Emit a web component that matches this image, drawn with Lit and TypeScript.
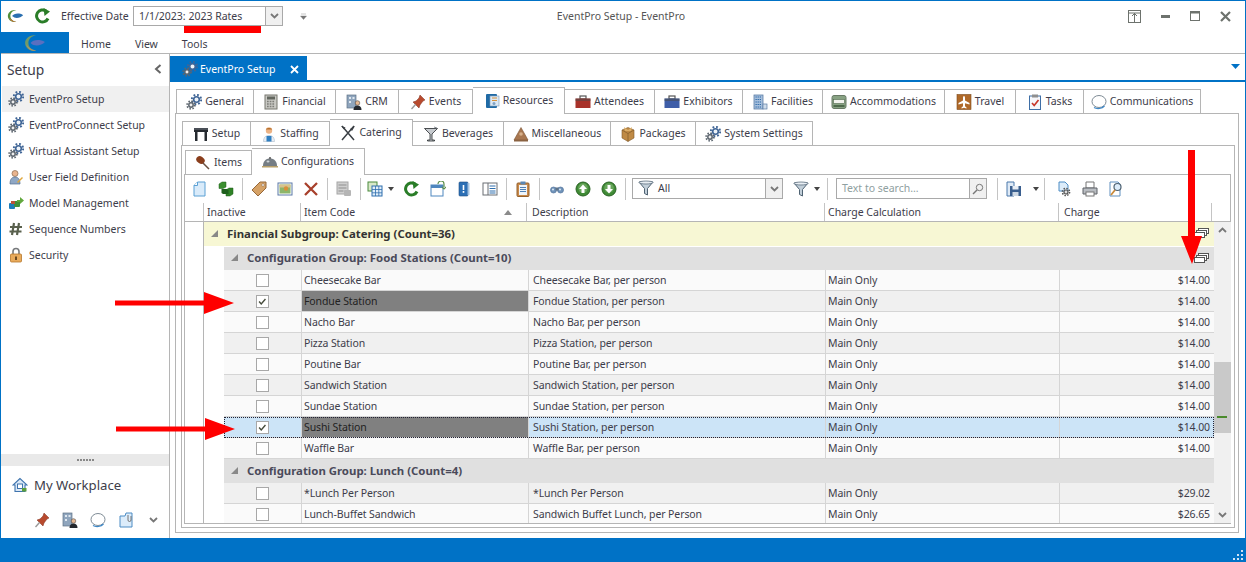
// app.ts - EventPro setup window: sidebar, nested tabs and the configurations grid

import {LitElement, html, css, svg} from 'lit';
import {customElement} from 'lit/decorators.js';

const BLUE = css`#0072c6`;

// every icon is drawn on a 16x16 box
const paths: Record<string, unknown> = {
  gear: svg`<circle cx="10.5" cy="5.5" r="2.800" fill="#eef3f8" stroke="#3f6596" stroke-width="1.600"/><circle cx="10.5" cy="5.5" r="4.700" fill="none" stroke="#3f6596" stroke-width="1.900" stroke-dasharray="1.800 1.900"/><circle cx="5" cy="11" r="2.200" fill="#eee" stroke="#5c656e" stroke-width="1.500"/><circle cx="5" cy="11" r="3.900" fill="none" stroke="#5c656e" stroke-width="1.700" stroke-dasharray="1.500 1.560"/>`,
  user: svg`<circle cx="7" cy="4.5" r="3" fill="#e9b48e" stroke="#8a6a50" stroke-width=".7"/><path d="M2 15c0-5 2-7 5-7s5 2 5 7z" fill="#8fa7c4" stroke="#56708f" stroke-width=".7"/><path d="M9 13l5-5 1 1-5 5z" fill="#e0a83c"/>`,
  model: svg`<rect x="1" y="8" width="6" height="6" rx="1" fill="#1c7db8"/><rect x="6" y="6" width="6" height="6" rx="1" fill="#3f8f3a"/><path d="M9 5h3V2l4 3.500L12 9V7H9z" fill="#62a83e"/><rect x="3" y="6" width="4" height="3" fill="#b9533a"/>`,
  hash: svg`<path d="M6 2L4 14M11 2L9 14M2 6h12M1.500 10.500h12" stroke="#59604d" stroke-width="2.200" fill="none"/>`,
  lock: svg`<path d="M5 7V4.500a3 3 0 0 1 6 0V7" fill="none" stroke="#77797c" stroke-width="1.600"/><rect x="2.500" y="7" width="11" height="8" rx="1" fill="#e9ab5c" stroke="#b5762c" stroke-width=".8"/><rect x="7" y="9.500" width="2" height="3.500" fill="#6b4a22"/>`,
  home: svg`<path d="M8 1.500L1 8h2v6.500h10V8h2z" fill="#dbe8f6" stroke="#3f74ae" stroke-width="1.100"/><rect x="5.500" y="7" width="5" height="4.500" fill="#fff" stroke="#3f74ae"/><rect x="10" y="11" width="4.500" height="3.500" fill="#5b9e3d"/>`,
  pin: svg`<path d="M10 1l5 5-2 1-3 4-1 3-6-6 3-1 3-3z" fill="#b84a2e" stroke="#7e2f1c" stroke-width=".5"/><path d="M5.500 10.500L1.500 15" stroke="#999" stroke-width="1.400"/>`,
  crm: svg`<rect x="1" y="1" width="9" height="13" fill="#8fa5bd" stroke="#5f7286" stroke-width=".7"/><path d="M3 3h2v2H3zM6.500 3h2v2h-2zM3 7h2v2H3z" fill="#dfe8f0"/><circle cx="11.500" cy="9" r="2.300" fill="#e6b892" stroke="#333" stroke-width=".5"/><path d="M7.500 16c0-3 1.500-4.500 4-4.500s4 1.500 4 4.500z" fill="#24282e"/>`,
  bubble: svg`<ellipse cx="8" cy="7.500" rx="7" ry="6" fill="#fff" stroke="#7f8c96" stroke-width="1"/><path d="M3 13.500c3 1.800 8 1.300 10.500-1.500" stroke="#3d87c7" stroke-width="1.200" fill="none"/>`,
  note: svg`<path d="M2 4h5l1-3h6v14H2z" fill="#dcecfa" stroke="#4c8cc4"/><path d="M10 3v5a1.500 1.500 0 0 0 3 0V4" fill="none" stroke="#666" stroke-width=".9"/>`,
  calc: svg`<rect x="2" y="1" width="12" height="14" fill="#c9c9c4" stroke="#77776f"/><rect x="4" y="2.500" width="8" height="3" fill="#62665e"/><path d="M4 7.500h8M4 10h8M4 12.500h8" stroke="#7d7d78" stroke-width="1.300" stroke-dasharray="1.700 1"/>`,
  resources: svg`<rect x="2" y="1" width="11" height="14" rx="1" fill="#1f6aa5"/><rect x="6" y="3" width="9" height="10" fill="#dce9f4" stroke="#7d99b5" stroke-width=".6"/><path d="M8 5h5M8 7.500h5" stroke="#d6913c"/><circle cx="10" cy="10.500" r="1.500" fill="#7fa2c4"/>`,
  building: svg`<rect x="2" y="1" width="9" height="14" fill="#a6bfdc" stroke="#5c7ea6" stroke-width=".8"/><path d="M3.500 3h6M3.500 5.500h6M3.500 8h6M3.500 10.500h6M3.500 13h6" stroke="#2f6aa8" stroke-width="1.200" stroke-dasharray="1.300 .8"/><rect x="11" y="10" width="4" height="5" fill="#cfdcea" stroke="#5c7ea6" stroke-width=".7"/>`,
  bed: svg`<rect x="1" y="1.500" width="14" height="13" rx="2" fill="#88a283" stroke="#697a66"/><rect x="2.500" y="5.500" width="11" height="4" fill="#f3f3ee" stroke="#4f6a4c" stroke-width=".6"/><rect x="2.500" y="11" width="11" height="2" fill="#4f6a4c"/>`,
  travel: svg`<rect x="1" y=".5" width="14" height="15" fill="#b06a2a" stroke="#7d4a1c" stroke-width=".6"/><path d="M8 2c.8 0 1 1 1 2v2.500l4.500 2.500v1.500L9 9.200v3l1.500 1.200v1L8 13.800l-2.500.6v-1L7 12.200v-3l-4.500 1.300V9L7 6.500V4c0-1 .2-2 1-2z" fill="#fff"/>`,
  tasks: svg`<rect x="2.500" y="2" width="11" height="13.500" fill="#f6f7fb" stroke="#3e6ea6"/><rect x="5" y=".5" width="6" height="3" fill="#8f8f8f"/><path d="M5 9l2.200 2.500L11.500 6" fill="none" stroke="#c8372a" stroke-width="1.700"/>`,
  table: svg`<path d="M1 3h14v3H1zM2 6h2.500v9H2zM11.500 6H14v9h-2.500z" fill="#262a30"/><rect x="1" y="2" width="14" height="2" fill="#4a4f57"/>`,
  staff: svg`<circle cx="8" cy="4.500" r="3.200" fill="#ecb283"/><path d="M5 3.500C5 1.500 11 1.500 11 3.500z" fill="#b5702e"/><path d="M2.500 15.500c0-4 2-6 5.500-6s5.500 2 5.500 6z" fill="#e8eef5" stroke="#9fb0c2" stroke-width=".5"/><path d="M5.500 10h5v5.500h-5z" fill="#2f7fc1"/>`,
  catering: svg`<path d="M2 1l12 14M14 1L2 15" stroke="#3a3f44" stroke-width="1.500"/><path d="M1 1l4.500 1.500-1.500 2z" fill="#3a3f44"/><path d="M15 1l-3 5-2-2z" fill="#3a3f44"/>`,
  glass: svg`<path d="M1.500 2.500h13L9 8v6h2.500v1h-7v-1H7V8z" fill="#c7cbcf" stroke="#24282c" stroke-width=".8"/><path d="M11 1l3 1" stroke="#8a8f95"/>`,
  misc: svg`<path d="M8 1.500l7 12.500H1z" fill="#a87750" stroke="#7a5233" stroke-width=".6"/><circle cx="8" cy="8" r="1.800" fill="#d8b08a"/><path d="M1 14h14v1.500H1z" fill="#8a6242"/>`,
  box: svg`<path d="M2 4l6-2.500L14 4v8l-6 3.500L2 12z" fill="#bf8a45" stroke="#80592a" stroke-width=".6"/><path d="M2 4l6 3.500L14 4M8 7.500v8" stroke="#80592a" fill="none" stroke-width=".7"/><path d="M4 1l4 3 4-3-1 4H5z" fill="#dcae68"/>`,
  leg: svg`<ellipse cx="5.500" cy="5" rx="4.500" ry="3.500" transform="rotate(35 5.500 5)" fill="#8a3e1c"/><path d="M8 8l6 6" stroke="#6a5040" stroke-width="1.500"/>`,
  dome: svg`<path d="M1 12c0-5 3-7.500 7-7.500s7 2.500 7 7.500z" fill="#757d84"/><ellipse cx="6" cy="7.500" rx="1.500" ry="1" fill="#cfd4d8"/><rect x="0" y="12" width="16" height="1.500" fill="#b8a06a"/><circle cx="8" cy="4" r="1" fill="#555"/>`,
  page: svg`<path d="M2 4.500L5.500 1H13v14H2z" fill="#d9ebfa" stroke="#5ba0d4"/><path d="M2 4.500h3.500V1" fill="#fff" stroke="#5ba0d4"/>`,
  cubes: svg`<path d="M1 3l3-2h4v5l-3 1.500H1z" fill="#3c8f30" stroke="#1f5e1a" stroke-width=".5"/><path d="M8 9l3-2h4v6l-3 2H8z" fill="#2f8226" stroke="#1c5a18" stroke-width=".5"/><path d="M3.500 8h5l2 1v4H5l-1.500-1z" fill="#1e5f1c"/>`,
  tag: svg`<path d="M1 9l8-8h6v6l-8 8z" fill="#d6a266" stroke="#96683a"/><circle cx="12" cy="4" r="1.300" fill="#fff" stroke="#7a5a3a" stroke-width=".5"/>`,
  image: svg`<rect x="1" y="2" width="14" height="12" fill="#fff" stroke="#5a78a6"/><rect x="2.500" y="3.500" width="11" height="9" fill="#8cb56a"/><rect x="2.500" y="3.500" width="11" height="3" fill="#d8c28c"/><circle cx="9" cy="7.500" r="2.200" fill="#d98f3a"/>`,
  del: svg`<path d="M2 2l12 12M14 2L2 14" stroke="#a8402c" stroke-width="2.300"/>`,
  disabled: svg`<rect x="1" y="1" width="11" height="12" fill="#cfcfcf" stroke="#a6a6a6"/><path d="M2.500 4h8M2.500 7h8M2.500 10h5" stroke="#8f8f8f"/><rect x="8" y="9" width="7" height="6" rx="1" fill="#b5b5b5"/>`,
  grid: svg`<rect x="1" y="1" width="9" height="9" fill="#d8e8c8" stroke="#4a8a3c"/><rect x="5" y="5" width="10" height="10" fill="#e2effa" stroke="#2f6fae"/><path d="M5 8.500h10M5 11.800h10M8.500 5v10M11.800 5v10" stroke="#2f6fae" stroke-width=".8"/>`,
  refresh: svg`<path d="M13 10.500A6 6 0 1 1 11 3" fill="none" stroke="#2a7d28" stroke-width="3"/><path d="M8.500 0L15 3.500 9.500 8z" fill="#2a7d28"/>`,
  win: svg`<rect x="1" y="4" width="12" height="11" fill="#fff" stroke="#4f87bf"/><rect x="1" y="4" width="12" height="3" fill="#4f87bf"/><path d="M8 3a3 3 0 0 1 6 0v3M12 6l2 2 2-2" fill="none" stroke="#5c8f4a" stroke-width="1.200"/>`,
  book: svg`<rect x="3" y="1" width="9" height="14" rx="1" fill="#2c6fb5" stroke="#1f4f85" stroke-width=".6"/><rect x="11.500" y="2" width="2" height="12" fill="#a8c5e3"/><rect x="6.700" y="4" width="1.600" height="5" fill="#fff"/><rect x="6.700" y="10" width="1.600" height="1.800" fill="#fff"/>`,
  list: svg`<rect x="1" y="2" width="14" height="12" fill="#fff" stroke="#6a6f75"/><path d="M6 2v12" stroke="#6a6f75"/><path d="M7.500 5h6M7.500 7.500h6M7.500 10h6M7.500 12h6" stroke="#2f6fae"/>`,
  clip: svg`<rect x="2" y="2" width="12" height="13.500" rx="1" fill="#c98a4a" stroke="#94602c"/><rect x="4" y="4" width="8" height="10" fill="#eef4fa"/><rect x="5.500" y=".5" width="5" height="3" fill="#5a87b5"/><path d="M5 6.500h6M5 8.500h6M5 10.500h6" stroke="#4f81b5"/>`,
  binoc: svg`<circle cx="4.500" cy="9" r="3" fill="#6f93ba" stroke="#56769c" stroke-width=".7"/><circle cx="11.500" cy="9" r="3" fill="#6f93ba" stroke="#56769c" stroke-width=".7"/><rect x="6.500" y="6.500" width="3" height="3" fill="#5f7387"/><circle cx="4" cy="8.500" r="1" fill="#dce8f3"/><circle cx="11" cy="8.500" r="1" fill="#dce8f3"/>`,
  up: svg`<circle cx="8" cy="8" r="7" fill="#3f8a35" stroke="#2a6424"/><circle cx="8" cy="7" r="4.800" fill="#8fc07f" opacity=".5"/><path d="M8 3.500L12 8H9.500v4h-3V8H4z" fill="#fff"/>`,
  down: svg`<circle cx="8" cy="8" r="7" fill="#3f8a35" stroke="#2a6424"/><circle cx="8" cy="7" r="4.800" fill="#8fc07f" opacity=".5"/><path d="M8 12.500L4 8h2.500V4h3v4H12z" fill="#fff"/>`,
  funnel: svg`<path d="M1 2h14L9.500 8.500V15l-3-1.500v-5z" fill="#c2cfd9" stroke="#4f6272"/><ellipse cx="8" cy="2.500" rx="7" ry="1.500" fill="#e8eef3" stroke="#4f6272" stroke-width=".7"/>`,
  save: svg`<path d="M1 1h7v14H1z" fill="#dfeaf6" stroke="#4a78ab"/><rect x="4" y="5" width="11" height="10" fill="#3a5f8f"/><rect x="6.500" y="5" width="6" height="3.500" fill="#e8eef5"/><rect x="6.500" y="11" width="6" height="4" fill="#cdd8e4"/>`,
  gearpage: svg`<path d="M3 1h6l3 3v6H3z" fill="#dcecfa" stroke="#4c8cc4"/><circle cx="10" cy="11" r="2" fill="#ddd" stroke="#555" stroke-width="1.200"/><circle cx="10" cy="11" r="3.600" fill="none" stroke="#555" stroke-width="1.500" stroke-dasharray="1.500 1.300"/>`,
  print: svg`<path d="M4 1h8v6H4z" fill="#fff" stroke="#777"/><path d="M1 7h14v6H1z" fill="#b9bdc2" stroke="#5f6368"/><rect x="4" y="11" width="8" height="4" fill="#fff" stroke="#777"/>`,
  find: svg`<path d="M2 1h8l2 2v12H2z" fill="#fff" stroke="#5f8fbf"/><circle cx="9.500" cy="6" r="3.500" fill="#dcecfa" stroke="#4f6272" stroke-width="1.200"/><path d="M7 9l-4 5" stroke="#c98a3a" stroke-width="1.800"/>`,
};

const icon = (name: string, size = 16) =>
  html`<svg class="ico" width=${size} height=${size} viewBox="0 0 16 16">${paths[name]}</svg>`;

const briefcase = (color: string) =>
  html`<svg class="ico" width="16" height="16" viewBox="0 0 16 16">
    <rect x="5" y="2" width="6" height="3" fill="none" stroke="#555" stroke-width="1.200"/>
    <rect x="0.500" y="4.500" width="15" height="9.500" fill=${color}/>
    <rect x="0.500" y="4.500" width="15" height="2.500" fill="#4a4a4a" opacity=".55"/>
  </svg>`;

const chevron = (up = false) =>
  html`<svg class="ico" width="9" height="6" viewBox="0 0 9 6">
    <path d=${up ? 'M1 5l3.500-3.500L8 5' : 'M1 1l3.500 3.500L8 1'} fill="none" stroke="#777" stroke-width="1.800"/>
  </svg>`;

const sheets = () =>
  html`<svg class="sheets" width="15" height="10" viewBox="0 0 15 10">
    <rect x="4.500" y=".5" width="10" height="5" fill="#fff" stroke="#555"/>
    <rect x="2.500" y="2.500" width="10" height="5" fill="#fff" stroke="#555"/>
    <rect x=".5" y="4.500" width="10" height="5" fill="#fff" stroke="#555"/>
  </svg>`;

const logo = (w: number, h: number, muted = false) =>
  html`<svg class="ico" width=${w} height=${h} viewBox="0 0 20 16">
    <path d="M11 1C5 0 1 4 1 8s4 8 10 7C6 14 4 11 4 8s2-6 7-7z" fill=${muted ? '#6f9a6a' : '#4f8f3a'}/>
    <path d="M11 15C6 14 3 11 2 9c1 4 4 7 9 6z" fill=${muted ? '#a8946a' : '#c9703a'}/>
    <path d="M6 8c2-3 8-4 13-1-3 3-9 5-13 1z" fill=${muted ? '#5a6fc0' : '#2a6fb0'}/>
  </svg>`;

const sideItems = [
  ['gear', 'EventPro Setup'],
  ['gear', 'EventProConnect Setup'],
  ['gear', 'Virtual Assistant Setup'],
  ['user', 'User Field Definition'],
  ['model', 'Model Management'],
  ['hash', 'Sequence Numbers'],
  ['lock', 'Security'],
];

type Tab = {label: string; icon: unknown; width: number; active?: boolean};

const outerTabs: Tab[] = [
  {label: 'General', icon: icon('gear'), width: 78},
  {label: 'Financial', icon: icon('calc'), width: 82},
  {label: 'CRM', icon: icon('crm'), width: 63},
  {label: 'Events', icon: icon('pin'), width: 74},
  {label: 'Resources', icon: icon('resources'), width: 92, active: true},
  {label: 'Attendees', icon: briefcase('#a8322a'), width: 90},
  {label: 'Exhibitors', icon: briefcase('#3f5ea8'), width: 88},
  {label: 'Facilities', icon: icon('building'), width: 80},
  {label: 'Accommodations', icon: icon('bed'), width: 122},
  {label: 'Travel', icon: icon('travel'), width: 71},
  {label: 'Tasks', icon: icon('tasks'), width: 68},
  {label: 'Communications', icon: icon('bubble'), width: 117},
];

const midTabs: Tab[] = [
  {label: 'Setup', icon: icon('table'), width: 69},
  {label: 'Staffing', icon: icon('staff'), width: 79},
  {label: 'Catering', icon: icon('catering'), width: 83, active: true},
  {label: 'Beverages', icon: icon('glass'), width: 91},
  {label: 'Miscellaneous', icon: icon('misc'), width: 107},
  {label: 'Packages', icon: icon('box'), width: 85},
  {label: 'System Settings', icon: icon('gear'), width: 117},
];

const innerTabs: Tab[] = [
  {label: 'Items', icon: icon('leg'), width: 67},
  {label: 'Configurations', icon: icon('dome'), width: 113, active: true},
];

type Row = {code: string; desc: string; charge: string; checked?: boolean; current?: boolean};

const foodRows: Row[] = [
  {code: 'Cheesecake Bar', desc: 'Cheesecake Bar, per person', charge: '$14.00'},
  {code: 'Fondue Station', desc: 'Fondue Station, per person', charge: '$14.00', checked: true},
  {code: 'Nacho Bar', desc: 'Nacho Bar, per person', charge: '$14.00'},
  {code: 'Pizza Station', desc: 'Pizza Station, per person', charge: '$14.00'},
  {code: 'Poutine Bar', desc: 'Poutine Bar, per person', charge: '$14.00'},
  {code: 'Sandwich Station', desc: 'Sandwich Station, per person', charge: '$14.00'},
  {code: 'Sundae Station', desc: 'Sundae Station, per person', charge: '$14.00'},
  {code: 'Sushi Station', desc: 'Sushi Station, per person', charge: '$14.00', checked: true, current: true},
  {code: 'Waffle Bar', desc: 'Waffle Bar, per person', charge: '$14.00'},
];

const lunchRows: Row[] = [
  {code: '*Lunch Per Person', desc: '*Lunch Per Person', charge: '$29.02'},
  {code: 'Lunch-Buffet Sandwich', desc: 'Sandwich Buffet Lunch, per Person', charge: '$26.65'},
];

@customElement('app-root')
export class AppRoot extends LitElement {
  static styles = css`
    :host {
      display: flex;
      flex-direction: column;
      width: 1246px;
      height: 562px;
      box-sizing: border-box;
      overflow: hidden;
      position: relative;
      border: solid ${BLUE};
      border-width: 1px 1px 0 1px;
      background: #fff;
      font-family: 'Noto Sans', sans-serif;
      font-size: 10.5px;
      color: #3d3d4a;
    }
    .ico { display: block; flex: none; }

    /* title bar */
    .titlebar {
      display: flex;
      align-items: center;
      height: 30px;
      flex: none;
      position: relative;
    }
    .titlebar .quick { display: flex; align-items: center; gap: 11px; padding-left: 6px; }
    .titlebar .eff { margin-left: 10px; width: 72px; white-space: nowrap; padding-bottom: 1px; }
    .combo {
      display: flex;
      align-items: stretch;
      box-sizing: border-box;
      border: 1px solid #a9a9a9;
      background: #fff;
    }
    .combo .val { flex: 1; display: flex; align-items: center; gap: 4px; padding: 0 0 1px 5px; }
    .combo .drop {
      width: 16px;
      display: flex;
      align-items: center;
      justify-content: center;
      background: #f0f0f0;
      border-left: 1px solid #a9a9a9;
    }
    .rate { width: 150px; height: 20px; }
    .custom { margin-left: 17px; }
    .caption {
      position: absolute;
      left: 0;
      right: 4px;
      text-align: center;
      color: #555;
      pointer-events: none;
    }
    .winbtns { margin-left: auto; display: flex; align-items: center; gap: 20px; padding-right: 14px; }

    /* ribbon */
    .ribbon {
      display: flex;
      align-items: stretch;
      height: 22px;
      flex: none;
      box-sizing: border-box;
      margin-top: 1px;
      border-bottom: 1px solid #b5b5b5;
    }
    .ribbon .app {
      width: 68px;
      background: ${BLUE};
      display: flex;
      align-items: center;
      justify-content: center;
    }
    .ribbon nav { display: flex; align-items: center; padding: 3px 0 0 12px; gap: 24px; }

    /* body */
    .main { flex: 1; display: flex; min-height: 0; }
    .side {
      width: 169px;
      flex: none;
      box-sizing: border-box;
      border-right: 1px solid #b5b5b5;
      display: flex;
      flex-direction: column;
    }
    .side-head {
      display: flex;
      align-items: center;
      justify-content: space-between;
      height: 32px;
      box-sizing: border-box;
      padding: 0 7px 2px 6px;
      font-size: 13.8px;
      flex: none;
    }
    .side-list { flex: 1; padding-left: 1px; }
    .side-item {
      display: flex;
      align-items: center;
      height: 26px;
      gap: 5px;
      padding-left: 6px;
    }
    .side-item.sel { background: #f0f0f0; }
    .splitter {
      height: 12px;
      background: #e9e9e9;
      display: flex;
      align-items: center;
      justify-content: center;
      gap: 1px;
      flex: none;
    }
    .splitter i { width: 2px; height: 2px; background: #888; }
    .workplace {
      display: flex;
      align-items: center;
      gap: 6px;
      height: 36px;
      box-sizing: border-box;
      padding: 1px 0 0 11px;
      font-size: 13.2px;
      flex: none;
    }
    .side-foot {
      display: flex;
      align-items: center;
      height: 36px;
      padding: 0 11px 0 33px;
      gap: 12px;
      flex: none;
    }
    .side-foot .more { margin-left: auto; }

    .content { flex: 1; min-width: 0; display: flex; flex-direction: column; }
    .docstrip {
      height: 28px;
      flex: none;
      box-sizing: border-box;
      padding-top: 2px;
      border-bottom: 2px solid ${BLUE};
      display: flex;
      justify-content: space-between;
      align-items: stretch;
    }
    .doctab {
      width: 137px;
      margin-bottom: -2px;
      background: ${BLUE};
      color: #fff;
      display: flex;
      align-items: center;
      gap: 2px;
      padding-left: 12px;
      box-sizing: border-box;
    }
    .doctab .x { margin-left: auto; margin-right: 8px; }
    .docarrow { margin: 8px 5px 0 0; }

    .tabset { display: flex; flex-direction: column; min-height: 0; flex: 1; box-sizing: border-box; }
    .tabs { display: flex; flex: none; height: 24px; padding-left: 1px; align-items: flex-end; position: relative; z-index: 1; }
    .tab {
      box-sizing: border-box;
      height: 24px;
      display: flex;
      align-items: center;
      justify-content: center;
      gap: 3px;
      border: 1px solid #b5b5b5;
      border-left-width: 0;
      border-bottom: 0;
      white-space: nowrap;
      background: #fff;
    }
    .tab span { padding-bottom: 2px; }
    .tab:first-child { border-left-width: 1px; }
    .tab.active {
      height: 27px;
      margin-bottom: -1px;
      padding-bottom: 1px;
    }
    .panel { flex: 1; min-height: 0; display: flex; flex-direction: column; box-sizing: border-box; border: 1px solid #b5b5b5; }
    .outer { margin: 7px 6px 5px 5px; }
    .outer > .panel { padding: 7px 3px 4px 5px; }
    .mid > .panel { padding: 4px 3px 3px 2px; }
    .inner > .panel { padding: 0; }

    /* toolbar */
    .toolbar { display: flex; align-items: center; height: 28px; box-sizing: border-box; flex: none; padding: 0 0 1px 2px; }
    .btn { width: 26px; height: 22px; display: flex; align-items: center; justify-content: center; flex: none; }
    .btn.tight { margin-left: -2px; }
    .btn.wide { margin-left: 1px; }
    .sep { width: 1px; height: 22px; background: #c4c4c4; margin: 0 3px; flex: none; }
    .sep.near { margin: 0 6px 0 5px; }
    .caret { width: 0; height: 0; border: 3px solid transparent; border-top: 4px solid #444; border-bottom: 0; flex: none; }
    .caret.a { margin-right: 5px; }
    .caret.b { margin-right: 4px; }
    .caret.c { margin-left: 6px; }
    .filter { width: 151px; height: 21px; margin: 0 5px 0 3px; }
    .search { width: 151px; height: 21px; margin: 0 7px 0 5px; color: #8fa0a0; }

    /* grid */
    .header {
      display: flex;
      height: 19px;
      flex: none;
      box-sizing: border-box;
      border-bottom: 1px solid #b5b5b5;
    }
    .hcols { display: grid; grid-template-columns: 97px 226px 298px 234px 154px; }
    .hcols > div {
      display: flex;
      align-items: center;
      justify-content: space-between;
      padding: 0 14px 0 3px;
      border-left: 1px solid #c4c4c4;
    }
    .hcols > div:nth-child(3), .hcols > div:nth-child(5) { padding-left: 5px; }
    .hcols > div:last-child { border-right: 1px solid #c4c4c4; }
    .sort { width: 0; height: 0; border: 4px solid transparent; border-bottom: 5px solid #8a8a8a; border-top: 0; }
    .gutter { width: 18px; flex: none; }
    .gridbody { flex: 1; min-height: 0; display: flex; }
    .gutter.line { border-right: 1px solid #b5b5b5; }
    .rows { width: 1010px; flex: none; overflow: hidden; }
    .g1, .g2 {
      display: flex;
      align-items: center;
      gap: 9px;
      font-weight: 700;
      font-size: 11.4px;
      position: relative;
      box-sizing: border-box;
      padding: 0 0 2px 7px;
    }
    .g1 { height: 24px; background: #f7f7d4; color: #333; }
    .g2 { height: 23px; background: #e0e0e0; color: #4a4a5a; }
    .g2.first { margin-top: 1px; }
    .g2.next { height: 24px; }
    .sheets { position: absolute; right: 5px; top: 6px; }
    .tri { width: 0; height: 0; border-style: solid; border-width: 0 0 7px 7px; border-color: transparent transparent #888 transparent; }
    .gblock { margin-left: 20px; }
    .row {
      display: grid;
      grid-template-columns: 77px 227px 297px 234px 154px;
      height: 21px;
      box-sizing: border-box;
      border-bottom: 1px solid #d5d5d5;
      background: #fafafa;
      letter-spacing: -0.1px;
    }
    .row.alt { background: #f0f0f0; }
    .row > div {
      display: flex;
      align-items: center;
      padding: 0 0 0 2px;
      border-left: 1px solid #d5d5d5;
      white-space: nowrap;
    }
    .row > div:nth-child(3) { padding-left: 4px; }
    .row > div:first-child { border-left: 0; justify-content: center; padding: 0; }
    .row .money { justify-content: flex-end; padding: 0 3px 0 0; }
    .row .flag { background: #808080; color: #222; }
    .row.current { background: #cce4f7; outline: 1px dotted #223; outline-offset: -1px; }
    .check { width: 13px; height: 13px; box-sizing: border-box; border: 1px solid #a8a8a8; background: #fff; display: block; }
    .scroll {
      width: 17px;
      flex: none;
      background: #f0f0f0;
      display: flex;
      flex-direction: column;
      align-items: center;
      position: relative;
      padding: 5px 0;
      box-sizing: border-box;
      justify-content: space-between;
    }
    .thumb { position: absolute; left: 0; right: 0; top: 140px; height: 71px; background: #c9c9c9; }
    .mark { position: absolute; left: 3px; width: 10px; height: 2px; top: 194px; background: #4a8a2c; }

    .status { height: 24px; flex: none; background: ${BLUE}; position: relative; }
    .grip { position: absolute; right: 2px; bottom: 2px; }

    .arrow { position: absolute; pointer-events: none; }
    .arrow.a1 { left: 114px; top: 291px; }
    .arrow.a2 { left: 115px; top: 417px; }
    .arrow.a3 { left: 1180px; top: 149px; }
    .underline { position: absolute; left: 183px; top: 25px; width: 77px; height: 7px; background: #f00; }
  `;

  private renderTabs(tabs: Tab[]) {
    return html`<div class="tabs">
      ${tabs.map(
        (t) => html`<div class="tab ${t.active ? 'active' : ''}" style="width:${t.width}px">${t.icon}<span>${t.label}</span></div>`
      )}
    </div>`;
  }

  private renderRow(r: Row, i: number) {
    return html`<div class="row ${i % 2 ? 'alt' : ''} ${r.current ? 'current' : ''}">
      <div>
        <svg class="check" viewBox="0 0 13 13">
          ${r.checked ? svg`<path d="M2.500 6.500l2.500 3 5-6" fill="none" stroke="#444a3a" stroke-width="1.600"/>` : ''}
        </svg>
      </div>
      <div class=${r.checked ? 'flag' : ''}>${r.code}</div>
      <div>${r.desc}</div>
      <div>Main Only</div>
      <div class="money">${r.charge}</div>
    </div>`;
  }

  private renderToolbar() {
    const btn = (n: string, cls = '') => html`<div class="btn ${cls}">${icon(n)}</div>`;
    const sep = html`<div class="sep"></div>`;
    return html`<div class="toolbar">
      ${btn('page')}${btn('cubes')}${sep}
      ${btn('tag')}${btn('image')}${btn('del')}${sep}
      ${btn('disabled')}${sep}
      ${btn('grid', 'tight')}<div class="caret a"></div>
      ${btn('refresh')}${btn('win')}${btn('book')}${btn('list')}${sep}
      ${btn('clip')}${sep}
      ${btn('binoc', 'wide')}${btn('up')}${btn('down')}${sep}
      <div class="combo filter">
        <div class="val">${icon('funnel')}<span>All</span></div>
        <div class="drop">${chevron()}</div>
      </div>
      ${btn('funnel')}<div class="caret b"></div>${sep}
      <div class="combo search">
        <div class="val">Text to search…</div>
        <div class="drop">
          <svg class="ico" width="12" height="12" viewBox="0 0 12 12">
            <circle cx="7.500" cy="4.500" r="3.200" fill="none" stroke="#777"/><path d="M5 7l-4 4" stroke="#777" stroke-width="1.400"/>
          </svg>
        </div>
      </div>
      ${sep}${btn('save')}<div class="caret c"></div><div class="sep near"></div>
      ${btn('gearpage')}${btn('print')}${btn('find')}
    </div>`;
  }

  private renderGrid() {
    return html`
      <div class="header">
        <div class="gutter"></div>
        <div class="hcols">
          <div>Inactive</div>
          <div>Item Code<span class="sort"></span></div>
          <div>Description</div>
          <div>Charge Calculation</div>
          <div>Charge</div>
        </div>
      </div>
      <div class="gridbody">
        <div class="gutter line"></div>
        <div class="rows">
          <div class="g1"><span class="tri"></span>Financial Subgroup: Catering (Count=36)${sheets()}</div>
          <div class="gblock">
            <div class="g2 first"><span class="tri"></span>Configuration Group: Food Stations (Count=10)${sheets()}</div>
            ${foodRows.map((r, i) => this.renderRow(r, i))}
            <div class="g2 next"><span class="tri"></span>Configuration Group: Lunch (Count=4)</div>
            ${lunchRows.map((r, i) => this.renderRow(r, i + 1))}
          </div>
        </div>
        <div class="scroll">
          <div class="thumb"></div>
          <div class="mark"></div>
          ${chevron(true)}${chevron()}
        </div>
      </div>`;
  }

  render() {
    return html`
      <div class="titlebar">
        <div class="caption">EventPro Setup - EventPro</div>
        <div class="quick">${logo(17, 14)}${icon('refresh')}</div>
        <span class="eff">Effective Date</span>
        <div class="combo rate">
          <div class="val">1/1/2023: 2023 Rates</div>
          <div class="drop">${chevron()}</div>
        </div>
        <svg class="ico custom" width="7" height="7" viewBox="0 0 7 7"><path d="M1 1h5M0.500 3h6L3.500 6.500z" fill="#777" stroke="#777" stroke-width=".4"/></svg>
        <div class="winbtns">
          <svg class="ico" width="13" height="13" viewBox="0 0 13 13"><rect x=".5" y=".5" width="12" height="12" fill="none" stroke="#6d726d"/><path d="M.5 3h12M6.500 3v10M4 6l2.500-2.500L9 6" fill="none" stroke="#6d726d"/></svg>
          <svg class="ico" width="9" height="3" viewBox="0 0 9 3"><rect width="9" height="3" fill="#6d726d"/></svg>
          <svg class="ico" width="10" height="10" viewBox="0 0 10 10"><rect x=".5" y=".5" width="9" height="9" fill="none" stroke="#6d726d"/><rect width="10" height="2.500" fill="#6d726d"/></svg>
          <svg class="ico" width="11" height="11" viewBox="0 0 11 11"><path d="M1 1l9 9M10 1l-9 9" stroke="#6d726d" stroke-width="2.200"/></svg>
        </div>
      </div>
      <div class="ribbon">
        <div class="app">${logo(22, 18, true)}</div>
        <nav><span>Home</span><span>View</span><span>Tools</span></nav>
      </div>
      <div class="main">
        <aside class="side">
          <div class="side-head"><span>Setup</span>
            <svg class="ico" width="8" height="10" viewBox="0 0 8 10"><path d="M6.500 1L2 5l4.500 4" fill="none" stroke="#666" stroke-width="2"/></svg>
          </div>
          <div class="side-list">
            ${sideItems.map(([ic, label], i) => html`<div class="side-item ${i === 0 ? 'sel' : ''}">${icon(ic)}<span>${label}</span></div>`)}
          </div>
          <div class="splitter"><i></i><i></i><i></i><i></i><i></i><i></i></div>
          <div class="workplace">${icon('home')}<span>My Workplace</span></div>
          <div class="side-foot">${icon('pin')}${icon('crm')}${icon('bubble')}${icon('note')}<span class="more">${chevron()}</span></div>
        </aside>
        <section class="content">
          <div class="docstrip">
            <div class="doctab">${icon('gear')}<span>EventPro Setup</span>
              <svg class="ico x" width="9" height="9" viewBox="0 0 9 9"><path d="M1 1l7 7M8 1L1 8" stroke="#fff" stroke-width="1.800"/></svg>
            </div>
            <svg class="ico docarrow" width="9" height="5" viewBox="0 0 9 5"><path d="M0 0h9L4.500 5z" fill="#0072c6"/></svg>
          </div>
          <div class="tabset outer">
            ${this.renderTabs(outerTabs)}
            <div class="panel">
              <div class="tabset mid">
                ${this.renderTabs(midTabs)}
                <div class="panel">
                  <div class="tabset inner">
                    ${this.renderTabs(innerTabs)}
                    <div class="panel">
                      ${this.renderToolbar()}
                      ${this.renderGrid()}
                    </div>
                  </div>
                </div>
              </div>
            </div>
          </div>
        </section>
      </div>
      <div class="status">
        <svg class="grip" width="10" height="10" viewBox="0 0 10 10"><path d="M8 0h2v2H8zM4 4h2v2H4zM8 4h2v2H8zM0 8h2v2H0zM4 8h2v2H4zM8 8h2v2H8z" fill="#cfe3f5"/></svg>
      </div>
      <div class="underline"></div>
      <svg class="arrow a1" width="119" height="22" viewBox="0 0 119 22"><path d="M0 8.500h89V0l30 11-30 11v-8.500H0z" fill="#f00"/></svg>
      <svg class="arrow a2" width="119" height="22" viewBox="0 0 119 22"><path d="M0 8.500h89V0l30 11-30 11v-8.500H0z" fill="#f00"/></svg>
      <svg class="arrow a3" width="22" height="114" viewBox="0 0 22 114"><path d="M7 0h7v86h7L11 114 0 86h7z" fill="#f00"/></svg>
    `;
  }
}
